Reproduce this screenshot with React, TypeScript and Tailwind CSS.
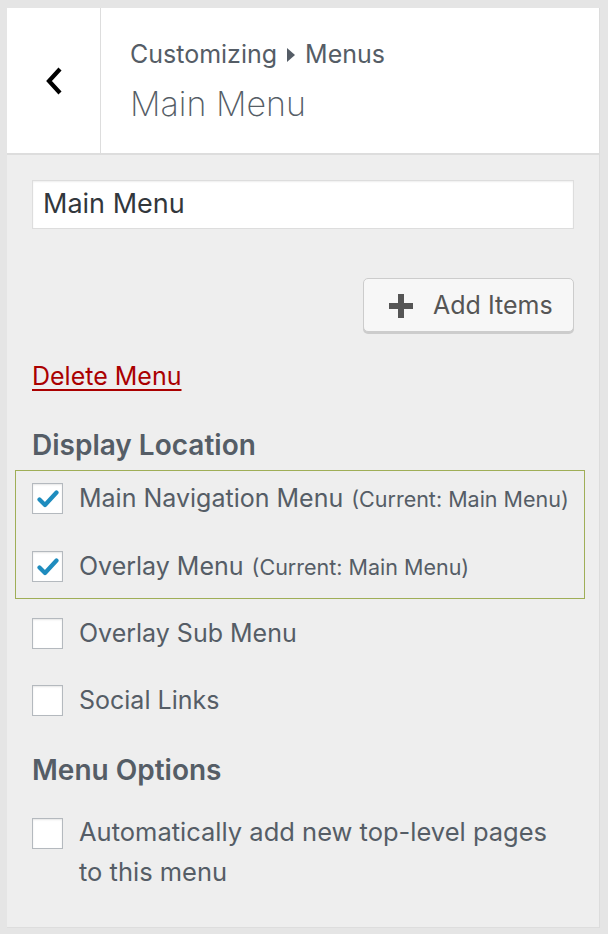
import React from 'react';

const font = { fontFamily: 'Inter, "Noto Sans", sans-serif' };

function Checkbox({ checked }: { checked?: boolean }) {
  return (
    <div className="w-[31px] h-[31px] shrink-0 bg-white border border-[#b4b9be] shadow-[inset_0_1px_2px_rgba(0,0,0,0.1)] flex items-center justify-center">
      {checked && (
        <svg width="22" height="20" viewBox="0 0 22 20">
          <path d="M2.5 10.5 L8 16 L19.5 3.5" fill="none" stroke="#1e8cbe" strokeWidth="4.2" strokeLinecap="round" strokeLinejoin="round" />
        </svg>
      )}
    </div>
  );
}

function LocationRow({ label, current, checked }: { label: string; current?: string; checked?: boolean }) {
  return (
    <div className="flex items-center h-[31px]">
      <Checkbox checked={checked} />
      <div className="ml-[16px] text-[25px] leading-none text-[#555d66] whitespace-nowrap">
        {label}
        {current && <span className="ml-[8px] text-[21.5px]">(Current: {current})</span>}
      </div>
    </div>
  );
}

export default function App() {
  return (
    <div className="w-[608px] h-[934px] bg-[#e5e5e5] pt-[8px] pl-[7px] pr-[8px] overflow-hidden" style={font}>
      <div className="flex flex-col h-[920px] border-r border-[#dcdcdc]">
        {/* Header */}
        <div className="flex h-[147px] bg-white border-b-2 border-[#dddddd]">
          <button className="w-[94px] shrink-0 border-r border-[#dddddd] flex items-center justify-center">
            <svg width="22" height="30" viewBox="0 0 22 30">
              <path d="M17 3 L6 15 L17 27" fill="none" stroke="#000" strokeWidth="4.2" strokeLinejoin="miter" />
            </svg>
          </button>
          <div className="pl-[29px] pt-[34px] text-[#555d66]">
            <div className="flex items-center text-[25px] leading-none">
              <span>Customizing</span>
              <svg width="10" height="14" viewBox="0 0 10 14" className="mx-[9px]">
                <path d="M1 0 L9 7 L1 14 Z" fill="#555d66" />
              </svg>
              <span>Menus</span>
            </div>
            <div className="mt-[20px] text-[34px] leading-none font-extralight">Main Menu</div>
          </div>
        </div>

        {/* Body */}
        <div className="flex-1 bg-[#eeeeee] pl-[25px] pr-[25px] pt-[25px] border-b border-[#dddddd]">
          <div className="h-[49px] bg-white border border-[#dddddd] shadow-[inset_0_1px_2px_rgba(0,0,0,0.07)] flex items-center pl-[10px] text-[27px] text-[#32373c]">
            Main Menu
          </div>

          <div className="flex justify-end mt-[49px]">
            <button className="w-[211px] h-[54px] bg-[#f7f7f7] border border-[#cccccc] rounded-[5px] shadow-[0_2px_0_#cccccc] flex items-center pl-[25px] pt-[2px] text-[25px] text-[#555555]">
              <svg width="24" height="24" viewBox="0 0 24 24">
                <path d="M9 0 H15 V9 H24 V15 H15 V24 H9 V15 H0 V9 H9 Z" fill="#555555" />
              </svg>
              <span className="ml-[20px]">Add Items</span>
            </button>
          </div>

          <div className="mt-[32px]">
            <a href="#" className="text-[25px] leading-none text-[#aa0000] underline underline-offset-[4px]">Delete Menu</a>
          </div>

          <div className="mt-[40px] text-[28px] leading-none font-semibold text-[#555d66]">Display Location</div>

          <div className="mt-[11px] ml-[-17px] mr-[-11px] border border-[#9fae57] pl-[16px] pt-[12px] pb-[16px] flex flex-col gap-[37px]">
            <LocationRow label="Main Navigation Menu" current="Main Menu" checked />
            <LocationRow label="Overlay Menu" current="Main Menu" checked />
          </div>

          <div className="mt-[19px] flex flex-col gap-[36px]">
            <LocationRow label="Overlay Sub Menu" />
            <LocationRow label="Social Links" />
          </div>

          <div className="mt-[40px] text-[28px] leading-none font-semibold text-[#555d66]">Menu Options</div>

          <div className="mt-[34px] flex items-start">
            <Checkbox />
            <div className="ml-[16px] text-[25.5px] leading-[40px] text-[#555d66] mt-[-6px]">
              Automatically add new top-level pages
              <br />
              to this menu
            </div>
          </div>
        </div>
      </div>
    </div>
  );
}
